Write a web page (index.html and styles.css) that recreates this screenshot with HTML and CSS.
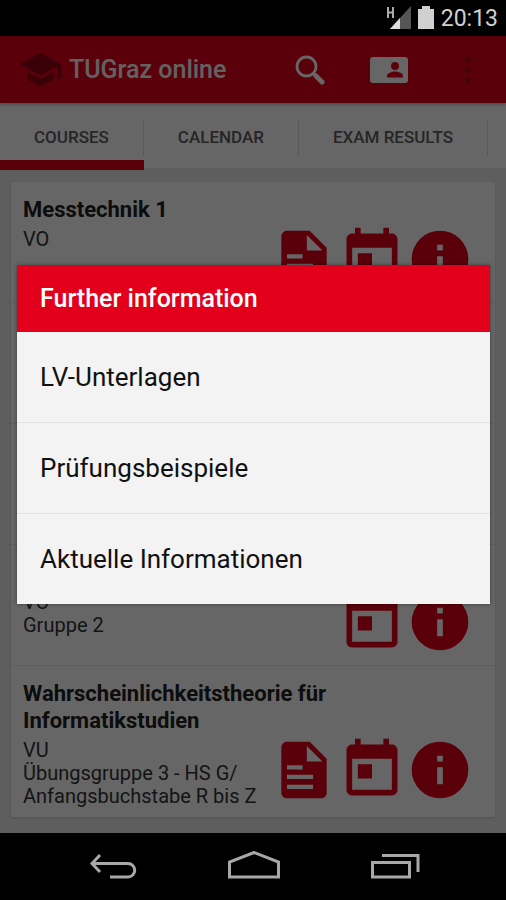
FILE: index.html
```html
<!DOCTYPE html>
<html lang="de">
  <head>
    <title>TUGraz online</title>
    <meta charset="utf-8" />
    <meta name="viewport" content="width=device-width, initial-scale=1" />
    <link rel="stylesheet" href="styles.css">
  </head>
  <body>
    <!-- icons used by every course row -->
    <svg class="defs" aria-hidden="true">
      <symbol id="doc" viewBox="0 0 24 24">
        <path fill-rule="evenodd" d="M6 2c-1.1 0-2 .9-2 2v16c0 1.1.9 2 2 2h12c1.1 0 2-.9 2-2V8l-6-6zM13 3.500V9h5.500zM6 10.300h5.500v1.500H6zM6 13.700h9.200v1.500H6zM6 17.200h9.200v1.500H6z"/>
      </symbol>
      <symbol id="event" viewBox="0 0 24 24">
        <path fill-rule="evenodd" d="M6 1v2H5c-1.100 0-2 .9-2 2v14c0 1.100.9 2 2 2h14c1.100 0 2-.9 2-2V5c0-1.100-.9-2-2-2h-1V1h-2v2H8V1zM5 8h14v11H5zM7 10h5v5H7z"/>
      </symbol>
      <symbol id="info" viewBox="0 0 24 24">
        <path fill-rule="evenodd" d="M12 2a10 10 0 1 0 0 20a10 10 0 1 0 0-20zM11 7h2v2h-2zM11 11h2v6h-2z"/>
      </symbol>
    </svg>

    <div class="status">
      <svg class="signal" width="26" height="24" viewBox="0 0 26 24" aria-hidden="true">
        <path fill="none" stroke="#aaa" stroke-width="2" d="M3 1v11M8 1v11M3 6.500h5"/>
        <path fill="#555" d="M26 0v23H5z"/>
        <path fill="#ddd" d="M15 12v11H5z"/>
      </svg>
      <svg class="battery" width="16" height="24" viewBox="0 0 16 24" aria-hidden="true">
        <path fill="#d0d0d0" d="M4 0h8v3h4v20H0V3h4z"/>
      </svg>
      <span class="clock">20:13</span>
    </div>

    <div class="app">
      <header class="bar">
        <svg class="cap" viewBox="0 0 24 24" aria-hidden="true">
          <path d="M5 13.180v4L12 21l7-3.820v-4L12 17l-7-3.820zM12 3L1 9l11 6 9-4.910V17h2V9L12 3z"/>
        </svg>
        <h1 class="brand">TUGraz online</h1>
        <button class="action search" aria-label="Suche">
          <svg width="30" height="30" viewBox="0 0 30 30">
            <circle cx="11.500" cy="11.500" r="9.500" fill="none" stroke="#fff" stroke-width="2.800"/>
            <path d="M18.500 18.500l2 2" stroke="#fff" stroke-width="3"/>
            <path d="M21 21l6 6" stroke="#fff" stroke-width="5" stroke-linecap="round"/>
          </svg>
        </button>
        <button class="action card-id" aria-label="Visitenkarte">
          <svg width="38" height="28" viewBox="0 0 38 28">
            <rect y="1" width="38" height="26" rx="3" fill="#fff"/>
            <circle cx="25" cy="10" r="4" fill="#e2001a"/>
            <path fill="#e2001a" d="M17 21.500v-1.500c0-3 5-4.500 8-4.500s8 1.500 8 4.500v1.500z"/>
          </svg>
        </button>
        <button class="action more" aria-label="Mehr">
          <svg width="8" height="28" viewBox="0 0 8 28">
            <g fill="#a80c1c">
              <circle cx="4" cy="4" r="3"/>
              <circle cx="4" cy="14" r="3"/>
              <circle cx="4" cy="24" r="3"/>
            </g>
          </svg>
        </button>
      </header>

      <nav class="tabs">
        <a class="tab active" href="#courses"><span>Courses</span></a>
        <a class="tab" href="#calendar"><span>Calendar</span></a>
        <a class="tab" href="#exams"><span>Exam results</span></a>
      </nav>

      <main class="content">
        <ul class="courses">
          <li class="course">
            <h2 class="name">Messtechnik 1</h2>
            <div class="details">
              <p class="group">VO</p>
              <div class="links">
                <svg class="icon"><use href="#doc"/></svg>
                <svg class="icon"><use href="#event"/></svg>
                <svg class="icon"><use href="#info"/></svg>
              </div>
            </div>
          </li>
          <li class="course"></li>
          <li class="course"></li>
          <li class="course">
            <h2 class="name">&nbsp;</h2>
            <div class="details">
              <p class="group">VO<br>Gruppe 2</p>
              <div class="links">
                <svg class="icon"><use href="#event"/></svg>
                <svg class="icon"><use href="#info"/></svg>
              </div>
            </div>
          </li>
          <li class="course">
            <h2 class="name">Wahrscheinlichkeitstheorie für Informatikstudien</h2>
            <div class="details">
              <p class="group">VU<br>Übungsgruppe 3 - HS G/ Anfangsbuchstabe R bis Z</p>
              <div class="links">
                <svg class="icon"><use href="#doc"/></svg>
                <svg class="icon"><use href="#event"/></svg>
                <svg class="icon"><use href="#info"/></svg>
              </div>
            </div>
          </li>
        </ul>
      </main>

      <div class="overlay">
        <div class="dialog" role="dialog" aria-labelledby="dialog-title">
          <h2 class="dialog-title" id="dialog-title">Further information</h2>
          <button class="option">LV-Unterlagen</button>
          <button class="option">Prüfungsbeispiele</button>
          <button class="option">Aktuelle Informationen</button>
        </div>
      </div>
    </div>

    <div class="navbar">
      <button class="key" aria-label="Zurück">
        <svg width="54" height="32" viewBox="0 0 54 32">
          <path d="M14 4L6 12.500l8 8.500M6 12.500h36a6.500 6.500 0 0 1 0 13.500H24"/>
        </svg>
      </button>
      <button class="key" aria-label="Start">
        <svg width="54" height="32" viewBox="0 0 54 32">
          <path d="M2.500 26V11L27 1.500 51.500 11v15z"/>
        </svg>
      </button>
      <button class="key" aria-label="Übersicht">
        <svg width="54" height="32" viewBox="0 0 54 32">
          <path d="M4.500 11.500h37V26h-37zM14 4.500h36V21"/>
        </svg>
      </button>
    </div>
  </body>
</html>
```
FILE: styles.css
```css
* {
  box-sizing: border-box;
}

body {
  display: flex;
  flex-direction: column;
  min-height: 100vh;
  margin: 0;
  background-color: #000000;
  font-family: Roboto, sans-serif;
}

h1,
h2,
p,
ul {
  margin: 0;
  padding: 0;
}

button {
  padding: 0;
  border: none;
  background: none;
  font-family: inherit;
  cursor: pointer;
}

svg {
  display: block;
}

.defs {
  position: absolute;
  width: 0;
  height: 0;
}

.status {
  display: flex;
  align-items: center;
  justify-content: flex-end;
  gap: 7px;
  height: 36px;
  padding-right: 8px;
}

.clock {
  color: #d0d0d0;
  font-size: 23px;
}

.app {
  position: relative;
  flex: 1;
  display: flex;
  flex-direction: column;
  background-color: #ebebeb;
}

.bar {
  position: relative;
  display: flex;
  align-items: center;
  height: 67px;
  padding: 0 34px 0 18px;
  background-color: #e2001a;
  box-shadow: 0 1px 4px rgba(0, 0, 0, 0.4);
}

.cap {
  width: 45px;
  height: 45px;
  margin-right: 6px;
  fill: #900012;
}

.brand {
  flex: 1;
  color: #f4f4f4;
  font-size: 25px;
  font-weight: 500;
}

.search {
  margin-right: 45px;
}

.card-id {
  margin-right: 56px;
}

.tabs {
  display: flex;
  height: 67px;
  overflow: hidden;
  background: linear-gradient(#ffffff 65px, #ebebeb 65px);
}

.tab {
  display: flex;
  align-items: center;
  height: 67px;
  color: #606060;
  font-size: 17px;
  font-weight: 500;
  text-decoration: none;
  text-transform: uppercase;
  white-space: nowrap;
}

.tab span {
  padding: 8px 34px;
  border-right: 1px solid #dddddd;
}

.active {
  border-bottom: 10px solid #e2001a;
  padding-top: 10px;
}

.content {
  padding: 12px 11px 15px;
}

.courses {
  list-style: none;
  background-color: #ffffff;
  border-radius: 2px;
  box-shadow: 0 1px 3px rgba(0, 0, 0, 0.15);
}

.course {
  min-height: 121px;
  padding: 14px 12px 9px;
  border-bottom: 1px solid #ececec;
}

.course:last-child {
  border-bottom: none;
}

.name {
  max-width: 340px;
  color: #222222;
  font-size: 22px;
  line-height: 27px;
  font-weight: 700;
}

.details {
  display: flex;
  justify-content: space-between;
  min-height: 70px;
  padding-right: 9px;
}

.group {
  width: 240px;
  padding-top: 5px;
  color: #333333;
  font-size: 20px;
  line-height: 23px;
}

.links {
  display: flex;
  padding-top: 2px;
}

.icon {
  width: 68px;
  height: 68px;
  fill: #e2001a;
}

.overlay {
  position: absolute;
  inset: 0;
  display: flex;
  align-items: center;
  padding: 0 16px 0 17px;
  background-color: rgba(0, 0, 0, 0.6);
}

.dialog {
  flex: 1;
  background-color: #f3f3f3;
  box-shadow: 0 0 4px rgba(0, 0, 0, 0.4);
}

.dialog-title {
  padding: 0 23px;
  background-color: #e2001a;
  color: #ffffff;
  font-size: 25px;
  line-height: 67px;
  font-weight: 500;
}

.option {
  display: block;
  width: 100%;
  padding: 0 23px;
  border-bottom: 1px solid #e2e2e2;
  color: #111111;
  font-size: 26px;
  line-height: 90px;
  text-align: left;
}

.option:last-child {
  border-bottom: none;
}

.option:hover {
  background-color: #e8e8e8;
}

.navbar {
  display: flex;
  align-items: center;
  justify-content: center;
  gap: 87px;
  height: 67px;
  padding-left: 2px;
}

.key svg {
  fill: none;
  stroke: #a8a8a8;
  stroke-width: 3px;
}
```
